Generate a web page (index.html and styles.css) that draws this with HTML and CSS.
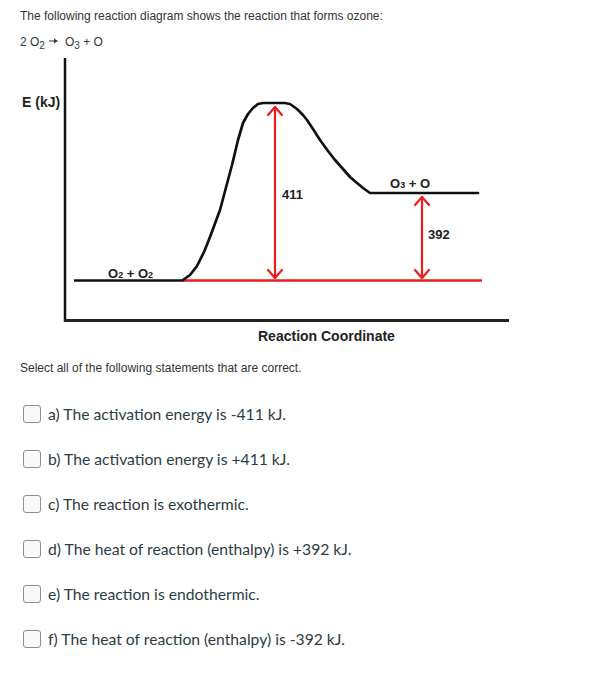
FILE: index.html
```html
<!DOCTYPE html>
<html>
<head>
<meta charset="utf-8">
<link rel="stylesheet" href="styles.css">
</head>
<body>
<div class="intro">
  <p class="line1">The following reaction diagram shows the reaction that forms ozone:</p>
  <p class="line2">2 O<sub>2</sub> <svg class="arrow" width="9" height="6" viewBox="0 0 9 6"><line x1="0" y1="3" x2="6" y2="3" stroke="#333" stroke-width="1"/><polygon points="5,0.5 9,3 5,5.5" fill="#333"/></svg>&nbsp; O<sub>3</sub> + O</p>
</div>
<svg class="diagram" width="603" height="300" viewBox="0 50 603 300" xmlns="http://www.w3.org/2000/svg">
  <line x1="65" y1="58" x2="65" y2="322" stroke="#111" stroke-width="2.5"/>
  <line x1="64" y1="320.5" x2="509" y2="320.5" stroke="#222" stroke-width="3"/>
  <line x1="74" y1="280.5" x2="184" y2="280.5" stroke="#111" stroke-width="2.5"/>
  <line x1="183" y1="280.5" x2="482" y2="280.5" stroke="#ee1c1c" stroke-width="2.5"/>
  <polyline fill="none" stroke="#111" stroke-width="2.7" stroke-linejoin="round" stroke-linecap="round"
    points="183,280 190,275 197,266 204,252 210,237 220,210 232,165 238,140 243,123 248,114 253,108 258,104 263,103 285,103 290,104 297,109 303,115 307,120 313,129 320,140 328,151 335,160 343,169 350,177 357,183 363,188 370,193 478,193"/>
  <g stroke="#ee1c1c" stroke-width="2.2" fill="none" stroke-linecap="round" stroke-linejoin="round">
    <line x1="275" y1="107" x2="275" y2="278"/>
    <polyline points="268,115 275,107 282,115"/>
    <polyline points="268,270 275,278 282,270"/>
    <line x1="422" y1="197" x2="422" y2="278"/>
    <polyline points="415,205 422,197 429,205"/>
    <polyline points="415,270 422,278 429,270"/>
  </g>
  <g class="lbl">
    <text x="22" y="107" class="axis">E (kJ)</text>
    <text x="258" y="341" class="axis">Reaction Coordinate</text>
    <text x="282" y="199">411</text>
    <text x="428" y="239">392</text>
    <text x="390" y="188">O<tspan class="sub">3</tspan> + O</text>
    <text x="108" y="278">O<tspan class="sub">2</tspan> + O<tspan class="sub">2</tspan></text>
  </g>
</svg>
<p class="prompt">Select all of the following statements that are correct.</p>
<ul class="options">
  <li><span class="box"></span><span>a) The activation energy is -411 kJ.</span></li>
  <li><span class="box"></span><span>b) The activation energy is +411 kJ.</span></li>
  <li><span class="box"></span><span>c) The reaction is exothermic.</span></li>
  <li><span class="box"></span><span>d) The heat of reaction (enthalpy) is +392 kJ.</span></li>
  <li><span class="box"></span><span>e) The reaction is endothermic.</span></li>
  <li><span class="box"></span><span>f) The heat of reaction (enthalpy) is -392 kJ.</span></li>
</ul>
</body>
</html>
```
FILE: styles.css
```css
html, body {
  margin: 0;
  padding: 0;
  background: #fff;
}
body {
  width: 603px;
  font-family: "Liberation Sans", Arial, sans-serif;
  color: #2d3b45;
}
.intro {
  padding: 8px 20px 0;
  height: 42px;
}
.line1, .line2 {
  margin: 0;
  font-size: 12px;
  line-height: 16px;
  color: #333;
}
.line2 {
  margin-top: 10px;
}
.line2 sub {
  font-size: 10px;
  line-height: 0;
  vertical-align: -3px;
}
.line2 .arrow {
  vertical-align: 2px;
  margin-left: 1px;
}
.diagram {
  display: block;
}
.lbl text {
  font-family: "Liberation Sans", Arial, sans-serif;
  font-weight: bold;
  font-size: 13px;
  fill: #222;
}
.lbl text.axis {
  font-size: 14px;
}
.lbl .sub {
  font-size: 9px;
}
.prompt {
  margin: 10px 0 0;
  padding-left: 20px;
  font-size: 12px;
  line-height: 16px;
  color: #333;
}
.options {
  list-style: none;
  margin: 15px 0 0;
  padding: 0 0 0 23px;
}
.options li {
  height: 45px;
  display: flex;
  align-items: center;
  gap: 7px;
  font-family: Lato, "Liberation Sans", sans-serif;
  font-size: 15.7px;
  color: #2d3b45;
}
.box {
  width: 16px;
  height: 16px;
  border: 1px solid #8b8f94;
  border-radius: 3px;
  background: #f8f9fb;
  flex: none;
}
```
